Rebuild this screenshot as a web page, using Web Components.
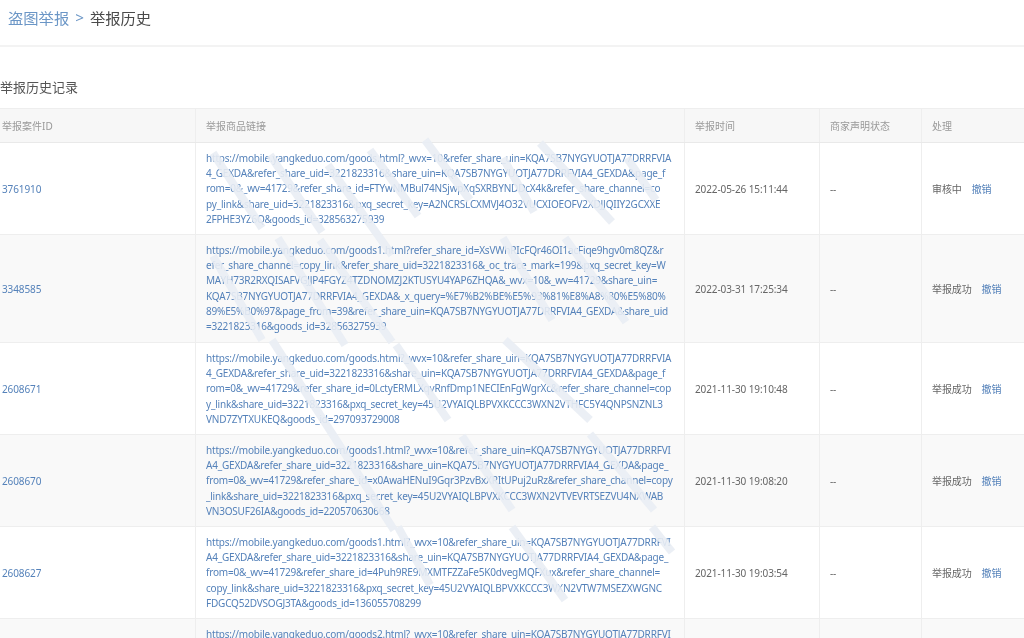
<!DOCTYPE html>
<html lang="zh">
<head>
<meta charset="utf-8">
<title>举报历史</title>
<style>
    html, body { margin: 0; height: 100%; overflow: hidden; background: #fff; }
    body { font-family: "Noto Sans", "Noto Sans CJK SC", sans-serif; position: relative; filter: blur(.3px); }
</style>
</head>
<body>
<crumb-bar parent="盗图举报" current="举报历史"></crumb-bar>
<history-panel heading="举报历史记录">
    <report-row case-id="3761910" time="2022-05-26 15:11:44" state="审核中">https://mobile.yangkeduo.com/goods.html?_wvx=10&amp;refer_share_uin=KQA7SB7NYGYUOTJA77DRRFVIA<br>4_GEXDA&amp;refer_share_uid=3221823316&amp;share_uin=KQA7SB7NYGYUOTJA77DRRFVIA4_GEXDA&amp;page_f<br>rom=0&amp;_wv=41729&amp;refer_share_id=FTYwNMBul74NSjwpXqSXRBYNDDcX4k&amp;refer_share_channel=co<br>py_link&amp;share_uid=3221823316&amp;pxq_secret_key=A2NCRSLCXMVJ4O32VUCXIOEOFV2XDJJQIIY2GCXXE<br>2FPHE3YZ6Q&amp;goods_id=328563275939</report-row>
    <report-row case-id="3348585" time="2022-03-31 17:25:34" state="举报成功" style="--row-height:108px">https://mobile.yangkeduo.com/goods1.html?refer_share_id=XsVWhRIcFQr46OI1acFiqe9hgv0m8QZ&amp;r<br>efer_share_channel=copy_link&amp;refer_share_uid=3221823316&amp;_oc_trace_mark=199&amp;pxq_secret_key=W<br>MAYH73R2RXQISAFVGJJP4FGYZ4TZDNOMZJ2KTUSYU4YAP6ZHQA&amp;_wvx=10&amp;_wv=41729&amp;share_uin=<br>KQA7SB7NYGYUOTJA77DRRFVIA4_GEXDA&amp;_x_query=%E7%B2%BE%E5%93%81%E8%A8%80%E5%80%<br>89%E5%B0%97&amp;page_from=39&amp;refer_share_uin=KQA7SB7NYGYUOTJA77DRRFVIA4_GEXDA&amp;share_uid<br>=3221823316&amp;goods_id=328563275939</report-row>
    <report-row case-id="2608671" time="2021-11-30 19:10:48" state="举报成功">https://mobile.yangkeduo.com/goods.html?_wvx=10&amp;refer_share_uin=KQA7SB7NYGYUOTJA77DRRFVIA<br>4_GEXDA&amp;refer_share_uid=3221823316&amp;share_uin=KQA7SB7NYGYUOTJA77DRRFVIA4_GEXDA&amp;page_f<br>rom=0&amp;_wv=41729&amp;refer_share_id=0LctyERMLXqvRnfDmp1NECIEnFgWgrXc&amp;refer_share_channel=cop<br>y_link&amp;share_uid=3221823316&amp;pxq_secret_key=45U2VYAIQLBPVXKCCC3WXN2VTHFC5Y4QNPSNZNL3<br>VND7ZYTXUKEQ&amp;goods_id=297093729008</report-row>
    <report-row case-id="2608670" time="2021-11-30 19:08:20" state="举报成功">https://mobile.yangkeduo.com/goods1.html?_wvx=10&amp;refer_share_uin=KQA7SB7NYGYUOTJA77DRRFVI<br>A4_GEXDA&amp;refer_share_uid=3221823316&amp;share_uin=KQA7SB7NYGYUOTJA77DRRFVIA4_GEXDA&amp;page_<br>from=0&amp;_wv=41729&amp;refer_share_id=x0AwaHENuI9Gqr3PzvBxXRItUPuj2uRz&amp;refer_share_channel=copy<br>_link&amp;share_uid=3221823316&amp;pxq_secret_key=45U2VYAIQLBPVXKCCC3WXN2VTVEVRTSEZVU4NXWAB<br>VN3OSUF26IA&amp;goods_id=220570630668</report-row>
    <report-row case-id="2608627" time="2021-11-30 19:03:54" state="举报成功">https://mobile.yangkeduo.com/goods1.html?_wvx=10&amp;refer_share_uin=KQA7SB7NYGYUOTJA77DRRFVI<br>A4_GEXDA&amp;refer_share_uid=3221823316&amp;share_uin=KQA7SB7NYGYUOTJA77DRRFVIA4_GEXDA&amp;page_<br>from=0&amp;_wv=41729&amp;refer_share_id=4Puh9RE9MXMTFZZaFe5K0dvegMQFXux&amp;refer_share_channel=<br>copy_link&amp;share_uid=3221823316&amp;pxq_secret_key=45U2VYAIQLBPVXKCCC3WXN2VTW7MSEZXWGNC<br>FDGCQ52DVSOGJ3TA&amp;goods_id=136055708299</report-row>
    <report-row>https://mobile.yangkeduo.com/goods2.html?_wvx=10&amp;refer_share_uin=KQA7SB7NYGYUOTJA77DRRFVI</report-row>
</history-panel>
<water-mark></water-mark>

<script>
const COLUMNS = '196px 489px 135px 102px 1fr';

class CrumbBar extends HTMLElement {
    connectedCallback() {
        this.attachShadow({ mode: 'open' });
        this.shadowRoot.innerHTML = `
            <style>
                :host {
                    display: flex;
                    align-items: center;
                    gap: 6px;
                    height: 33px;
                    padding: 0 0 12px 8px;
                    border-bottom: 2px solid #f3f3f3;
                    font-size: 15.3px;
                    color: #4a4a4a;
                }
                a { color: #6b96c6; text-decoration: none; }
            </style>
            <a href="#">${this.getAttribute('parent')}</a>
            <a href="#">&gt;</a>
            <span>${this.getAttribute('current')}</span>
        `;
    }
}

class HistoryPanel extends HTMLElement {
    connectedCallback() {
        this.attachShadow({ mode: 'open' });
        this.shadowRoot.innerHTML = `
            <style>
                :host { display: block; }
                h2 {
                    margin: 0;
                    padding-top: 31px;
                    height: 30px;
                    line-height: 18px;
                    font-size: 13px;
                    font-weight: 400;
                    color: #555;
                }
                .head {
                    display: grid;
                    grid-template-columns: ${COLUMNS};
                    height: 33px;
                    background: #f7f7f7;
                    border-top: 1px solid #eee;
                    border-bottom: 1px solid #e9e9e9;
                    font-size: 10px;
                    color: #999;
                }
                .head div {
                    display: flex;
                    align-items: center;
                    padding-left: 10px;
                    border-right: 1px solid #eee;
                }
                .head div:first-child { padding-left: 2px; }
                .head div:last-child { border-right: 0; }
                ::slotted(report-row:nth-of-type(even)) { background: #f9f9f9; }
            </style>
            <h2>${this.getAttribute('heading')}</h2>
            <div class="head">
                <div>举报案件ID</div>
                <div>举报商品链接</div>
                <div>举报时间</div>
                <div>商家声明状态</div>
                <div>处理</div>
            </div>
            <slot></slot>
        `;
    }
}

class ReportRow extends HTMLElement {
    connectedCallback() {
        const state = this.getAttribute('state');
        this.attachShadow({ mode: 'open' });
        this.shadowRoot.innerHTML = `
            <style>
                :host {
                    display: grid;
                    grid-template-columns: ${COLUMNS};
                    min-height: var(--row-height, 92px);
                    box-sizing: border-box;
                    border-bottom: 1px solid #eee;
                    font-size: 10px;
                    letter-spacing: -.1px;
                    color: #666;
                }
                .cell {
                    display: flex;
                    align-items: center;
                    padding-left: 10px;
                    border-right: 1px solid #eee;
                    white-space: nowrap;
                }
                .cell.id { padding-left: 2px; color: #5582ba; }
                .cell:last-of-type { border-right: 0; }
                .link {
                    display: block;
                    padding: 8px 0 7px 10px;
                    line-height: 15.2px;
                    letter-spacing: -.2px;
                    color: #5582ba;
                }
                a { color: #5582ba; text-decoration: none; margin-left: 10px; }
            </style>
            <div class="cell id">${this.getAttribute('case-id') || ''}</div>
            <div class="cell link"><slot></slot></div>
            <div class="cell">${this.getAttribute('time') || ''}</div>
            <div class="cell">${state ? '--' : ''}</div>
            <div class="cell">${state ? `${state}<a href="#">撤销</a>` : ''}</div>
        `;
    }
}

// diagonal smears painted over the table, each entry is x1 y1 x2 y2
const STRIPS = [
    [213,153,262,228], [270,155,322,232], [328,165,392,255], [370,150,418,216], [425,140,470,200],
    [503,158,534,212], [540,143,612,222], [627,158,656,200],
    [213,256,262,340], [278,238,345,345], [320,240,392,342], [503,238,552,320], [565,238,626,322],
    [272,340,394,530], [396,345,448,420], [505,340,590,420], [462,436,512,510], [590,434,654,510],
    [398,527,430,585], [512,527,565,600], [652,527,672,552]
];

class WaterMark extends HTMLElement {
    connectedCallback() {
        this.attachShadow({ mode: 'open' });
        const lines = STRIPS.map(s =>
            `<line x1="${s[0]}" y1="${s[1]}" x2="${s[2]}" y2="${s[3]}"/>`
        ).join('');
        this.shadowRoot.innerHTML = `
            <style>
                :host { position: absolute; inset: 0; pointer-events: none; }
                svg { display: block; width: 100%; height: 100%; }
                line { stroke: #e9edf4; stroke-width: 8; stroke-opacity: .9; }
            </style>
            <svg xmlns="http://www.w3.org/2000/svg" viewBox="0 0 1024 638">${lines}</svg>
        `;
    }
}

customElements.define('crumb-bar', CrumbBar);
customElements.define('history-panel', HistoryPanel);
customElements.define('report-row', ReportRow);
customElements.define('water-mark', WaterMark);
</script>
</body>
</html>
